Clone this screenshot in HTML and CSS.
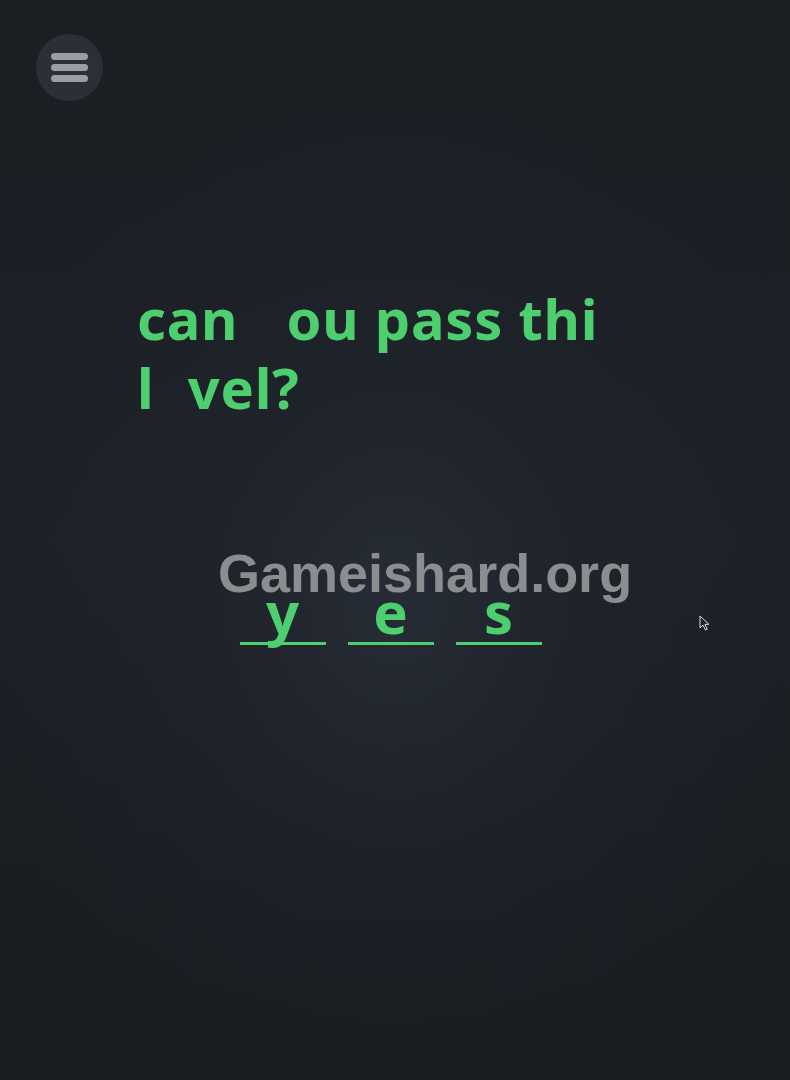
FILE: index.html
```html
<!DOCTYPE html>
<html lang="en">
<head>
<meta charset="utf-8">
<title>Can you pass this level?</title>
<link rel="stylesheet" href="styles.css">
</head>
<body>
<div class="screen">
  <header class="topbar">
    <button class="menu-btn" aria-label="Menu">
      <span class="bar"></span>
      <span class="bar"></span>
      <span class="bar"></span>
    </button>
  </header>
  <main class="stage">
    <h1 class="question">can <span class="blank">y</span>ou pass thi<span class="blank">s</span> l<span class="blank">e</span>vel?</h1>
    <div class="answer">
      <div class="slot">y</div>
      <div class="slot">e</div>
      <div class="slot">s</div>
    </div>
  </main>
  <div class="watermark">Gameishard.org</div>
  <svg class="cursor" width="11" height="16" viewBox="0 0 11 16" aria-hidden="true">
    <path d="M1 1 L1 13 L4 10 L6.5 15 L8.3 14.2 L5.9 9.3 L10 9.3 Z" fill="#1c1f24" stroke="#d8dadd" stroke-width="1" stroke-linejoin="round"/>
  </svg>
</div>
</body>
</html>
```
FILE: styles.css
```css
html, body {
  margin: 0;
  padding: 0;
}
body {
  background: #1b1e23;
  font-family: "Noto Sans", "DejaVu Sans", sans-serif;
}
.screen {
  position: relative;
  width: 790px;
  height: 1080px;
  overflow: hidden;
  background:
    radial-gradient(ellipse 420px 520px at 50% 56%, rgba(40, 46, 56, 0.85) 0%, rgba(32, 37, 45, 0.55) 45%, rgba(27, 30, 35, 0) 100%),
    linear-gradient(180deg, #1b1e23 0%, #1d2127 50%, #181b1f 100%);
}
.topbar {
  padding: 34px 0 0 36px;
  height: 67px;
}
.menu-btn {
  width: 67px;
  height: 67px;
  border-radius: 50%;
  border: none;
  padding: 0;
  background: #2b2f37;
  display: flex;
  flex-direction: column;
  align-items: center;
  justify-content: center;
  gap: 4.5px;
  cursor: pointer;
}
.bar {
  display: block;
  width: 37px;
  height: 6.5px;
  border-radius: 3.5px;
  background: #9a9da5;
}
.stage {
  display: flex;
  flex-direction: column;
  align-items: center;
  padding-right: 9px;
}
.question {
  width: 507px;
  margin: 183px 0 0 0;
  font-family: "Noto Sans", "DejaVu Sans", sans-serif;
  font-weight: 700;
  font-size: 56px;
  line-height: 69px;
  letter-spacing: 0.8px;
  color: #4ecf6f;
  text-align: left;
}
.blank {
  color: transparent;
}
.answer {
  display: flex;
  gap: 22px;
  margin-top: 173px;
}
.slot {
  width: 86px;
  height: 34px;
  padding-bottom: 13px;
  border-bottom: 3px solid #4ecf6f;
  text-align: center;
  font-family: "Noto Sans", "DejaVu Sans", sans-serif;
  font-weight: 700;
  font-size: 58px;
  line-height: 34px;
  color: #4ecf6f;
  overflow: visible;
}
.watermark {
  position: absolute;
  left: 218px;
  top: 553px;
  font-family: "Liberation Sans", Arial, sans-serif;
  font-weight: 700;
  font-size: 54px;
  line-height: 40px;
  color: #8b8d91;
  white-space: nowrap;
}
.cursor {
  position: absolute;
  left: 699px;
  top: 615px;
}
```
